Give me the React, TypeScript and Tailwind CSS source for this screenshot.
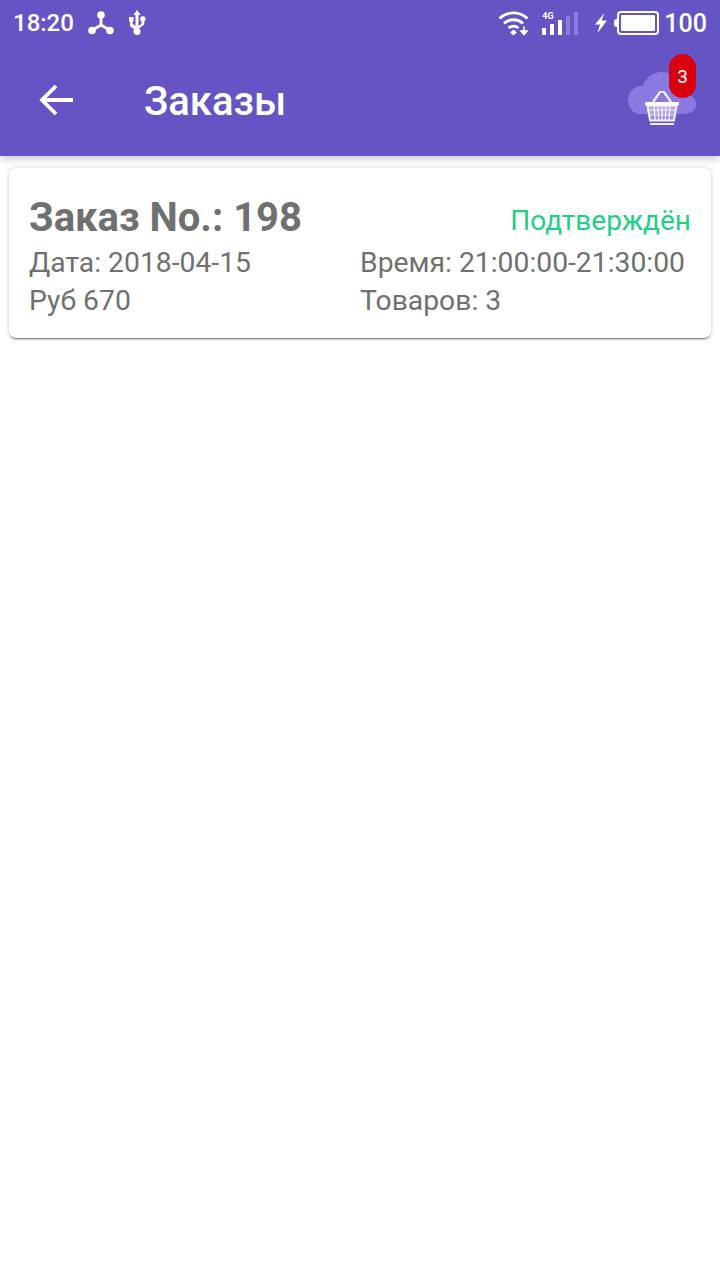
import React from "react";

const Usb = () => (
  <svg width="18" height="26" viewBox="0 0 18 26" fill="#fff">
    <path d="M9 0l3.600 5H10.500v12.500h-3V5H5.400z" />
    <circle cx="9" cy="21.500" r="3.500" />
    <path d="M1 7h4.500v4.500H4.600v2.300L10 17.500v3H8l-6-4.300v-4.700H1z" />
    <circle cx="14.800" cy="9" r="2.700" />
    <path d="M13.500 10h2.800v4.500L9 20v-3l4.500-3.200z" />
  </svg>
);

const Hub = () => (
  <svg width="26" height="24" viewBox="0 0 26 24" fill="none">
    <circle cx="13" cy="4" r="3.800" fill="#fff" />
    <circle cx="4" cy="19.500" r="3.800" fill="#fff" />
    <circle cx="22" cy="19.500" r="3.800" fill="#fff" />
    <path d="M13 5v9M13 14L4.500 19M13 14l8.500 5" stroke="#fff" strokeWidth="2.800" />
  </svg>
);

const Wifi = () => (
  <svg width="32" height="26" viewBox="0 0 32 26" fill="none" stroke="#fff" strokeWidth="2.800">
    <path d="M1.500 8.500C9.500 1 21.500 1 29.500 8.500" />
    <path d="M6 13.500c5.500-5 13.500-5 19 0" />
    <path d="M10.500 18c2.800-2.500 7.200-2.500 10 0" />
    <path d="M15.500 19.500l3.500 3-3.500 3-3.500-3z" fill="#fff" stroke="none" />
    <path d="M26 16.500v6M23 21l3 3.500 3-3.500z" fill="#fff" strokeWidth="1.600" />
  </svg>
);

const Bolt = () => (
  <svg width="14" height="20" viewBox="0 0 14 20" fill="#fff">
    <path d="M10.500 0L1 11.500h5L3.500 20 13 7.500H7.500z" />
  </svg>
);

const Basket = () => (
  <svg width="36" height="36" viewBox="0 0 36 36" fill="none" stroke="#fff" strokeOpacity="0.9">
    <path d="M9 12L16 2h4l7 10" strokeWidth="2.200" />
    <path d="M1.500 12.500h33v2.500h-33z" fill="#fff" strokeWidth="1" />
    <path d="M3.500 15.500l2.500 15h24l2.500-15z" fill="#ffffff55" strokeWidth="2" />
    <path d="M10 16l1.200 14M14 16l.7 14M18 16v14M22 16l-.7 14M26 16l-1.200 14M4.500 20h27M5.200 25h25.600" strokeWidth="1.200" />
    <path d="M6 34h24" strokeWidth="2" />
  </svg>
);

const Cloud = () => (
  <svg width="68" height="42" viewBox="0 0 68 42" fill="#8979e0">
    <path d="M13 42C5 42 0 36 0 28c0-8 6-14 14-14h1C17 6 25 0 34 0c9 0 16 5 19 13 1 3 1 6 1 9h2c7 0 12 4 12 10s-5 10-12 10z" />
  </svg>
);

export default function App() {
  return (
    <div className="min-h-[1280px] w-[720px] bg-white font-['Roboto',sans-serif]">
      <header className="relative h-[156px] bg-[#6554c4] shadow-[0_2px_8px_rgba(0,0,0,0.25)]">
        <div className="flex h-[46px] items-center justify-between pl-[13px] pr-[13px] text-white">
          <div className="flex items-center">
            <span className="text-[24px] font-medium">18:20</span>
            <span className="ml-[14px] flex"><Hub /></span>
            <span className="ml-[14px] flex"><Usb /></span>
          </div>
          <div className="flex items-center">
            <Wifi />
            <div className="relative ml-[12px] flex h-[24px] w-[36px] items-end justify-between">
              <span className="absolute left-0 top-[1px] text-[9px] font-bold leading-[9px]">4G</span>
              <span className="h-[7px] w-[4px] bg-white" />
              <span className="h-[11px] w-[4px] bg-white" />
              <span className="h-[15px] w-[4px] bg-white" />
              <span className="h-[19px] w-[4px] bg-[#8b7ed8]" />
              <span className="h-[23px] w-[4px] bg-[#8b7ed8]" />
            </div>
            <span className="ml-[16px] flex"><Bolt /></span>
            <div className="ml-[6px] flex items-center">
              <span className="h-[8px] w-[3px] rounded-l-sm bg-white" />
              <span className="flex h-[24px] w-[42px] rounded-[4px] border-[2.5px] border-white p-[2px]">
                <span className="w-full rounded-[1px] bg-white" />
              </span>
            </div>
            <span className="ml-[5px] text-[25px] font-medium leading-none">100</span>
          </div>
        </div>
        <div className="relative flex h-[110px] items-center">
          <svg className="ml-[39px] mb-[2px]" width="34" height="32" viewBox="0 0 34 32" fill="none" stroke="#fff" strokeWidth="3.800">
            <path d="M34 16H3M17 2L3 16l14 14" />
          </svg>
          <span className="ml-[71px] mt-[2px] text-[40px] font-medium leading-none text-white">Заказы</span>
          <div className="absolute left-[628px] top-[26px]">
            <Cloud />
            <span className="absolute left-[16px] top-[18px]"><Basket /></span>
          </div>
          <span className="absolute left-[669px] top-[8px] flex h-[44px] w-[27px] items-center justify-center rounded-[14px] bg-[#d90010] pt-[3px] text-[19px] text-white">3</span>
        </div>
      </header>
      <div className="px-[9px] pt-[12px]">
        <div className="relative h-[170px] rounded-[7px] bg-white px-[20px] pt-[27px] text-[#707070] shadow-[0_2px_2px_-1px_rgba(0,0,0,0.55),0_0_5px_rgba(0,0,0,0.18)]">
          <div className="text-[40px] font-bold leading-[46px]">Заказ No.: 198</div>
          <div className="absolute right-[20px] top-[37px] text-[28px] leading-[32px] text-[#21cf85]">Подтверждён</div>
          <div className="mt-[3px] grid grid-cols-[331px_1fr] text-[28.3px] leading-[38px]">
            <span>Дата: 2018-04-15</span>
            <span>Время: 21:00:00-21:30:00</span>
            <span>Руб 670</span>
            <span>Товаров: 3</span>
          </div>
        </div>
      </div>
    </div>
  );
}
